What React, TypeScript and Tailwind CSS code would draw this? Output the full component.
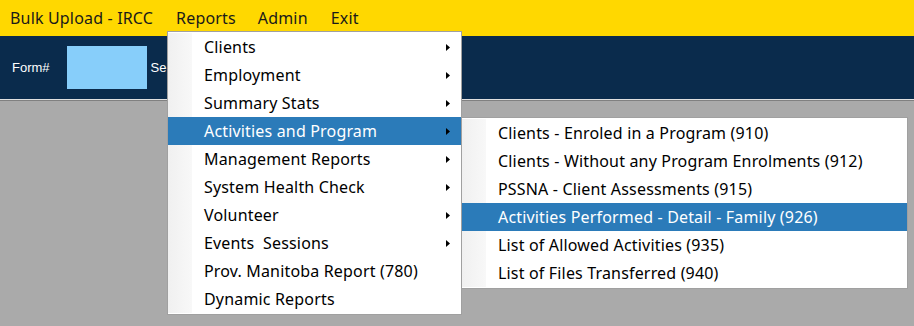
import { ReactNode } from 'react'

const reportItems = [
  { label: 'Clients', sub: true },
  { label: 'Employment', sub: true },
  { label: 'Summary Stats', sub: true },
  { label: 'Activities and Program', sub: true, active: true },
  { label: 'Management Reports', sub: true },
  { label: 'System Health Check', sub: true },
  { label: 'Volunteer', sub: true },
  { label: 'Events\u00a0 Sessions', sub: true },
  { label: 'Prov. Manitoba Report (780)' },
  { label: 'Dynamic Reports' },
]

const activityItems = [
  { label: 'Clients - Enroled in a Program (910)' },
  { label: 'Clients - Without any Program Enrolments (912)' },
  { label: 'PSSNA - Client Assessments (915)' },
  { label: 'Activities Performed - Detail - Family (926)', active: true },
  { label: 'List of Allowed Activities (935)' },
  { label: 'List of Files Transferred (940)' },
]

function Arrow() {
  return (
    <svg width="4" height="7" viewBox="0 0 4 7" className="shrink-0">
      <path d="M0 0 L4 3.5 L0 7 Z" fill="#000" />
    </svg>
  )
}

function MenuRow({ label, sub, active }: { label: string; sub?: boolean; active?: boolean }) {
  return (
    <div className={`flex h-[28px] items-center ${active ? 'bg-[#2b7bb9] text-white' : 'text-black'}`}>
      <div className={`w-[24px] h-full shrink-0 ${active ? '' : 'bg-gradient-to-r from-[#f0f0f0] to-[#f8f8f8]'}`} />
      <span className="pl-[12px] flex-1 whitespace-nowrap">{label}</span>
      {sub && (
        <div className="pr-[11px] flex items-center">
          <Arrow />
        </div>
      )}
    </div>
  )
}

function Menu({ children, className }: { children: ReactNode; className: string }) {
  return (
    <div className={`absolute bg-white border border-[#a0a0a0] py-[1px] ${className}`}>{children}</div>
  )
}

export default function App() {
  return (
    <div
      className="relative w-[914px] h-[326px] overflow-hidden bg-[#aaaaaa] tracking-[0.17px]"
      style={{ fontFamily: '"Noto Sans", "Open Sans", sans-serif' }}
    >
      {/* barra de menu */}
      <div className="h-[36px] bg-[#ffd800] flex items-center text-[16px] text-[#1a1a1a]">
        <span className="ml-[10px]">Bulk Upload - IRCC</span>
        <span className="ml-[23px]">Reports</span>
        <span className="ml-[22px]">Admin</span>
        <span className="ml-[23px]">Exit</span>
      </div>

      {/* cabeçalho azul */}
      <div className="h-[64px] bg-[#0a2b4c] flex items-center text-white text-[13px] tracking-normal border-b border-[#e0e0e0]"
        style={{ fontFamily: '"Liberation Sans", Arial, sans-serif' }}>
        <span className="ml-[12px]">Form#</span>
        <div className="ml-[17px] w-[80px] h-[43px] bg-[#87cefa]" />
        <span className="ml-[4px]">Se</span>
      </div>
      <div className="h-[1px] bg-[#808080]" />

      <Menu className="left-[167px] top-[31px] w-[295px] text-[16px]">
        {reportItems.map((it) => (
          <MenuRow key={it.label} {...it} />
        ))}
      </Menu>

      <Menu className="left-[461px] top-[117px] w-[447px] text-[16px]">
        {activityItems.map((it) => (
          <MenuRow key={it.label} {...it} />
        ))}
      </Menu>
    </div>
  )
}
